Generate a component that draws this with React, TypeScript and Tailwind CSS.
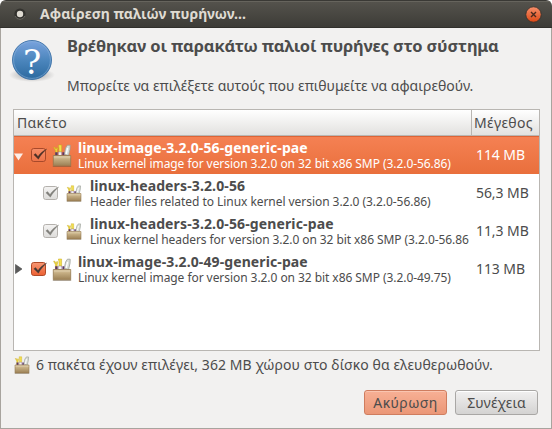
import type { ReactNode } from 'react';

function Toolbox({ className }: { className: string }) {
  return (
    <svg viewBox="0 0 20 23" className={className} preserveAspectRatio="none">
      <defs>
        <linearGradient id="box" x1="0" y1="0" x2="0" y2="1">
          <stop offset="0" stopColor="#cdb991" />
          <stop offset="0.35" stopColor="#c4ad82" />
          <stop offset="1" stopColor="#9b8055" />
        </linearGradient>
      </defs>
      <path d="M12.2 10.5 13.6 4 15.4 1.2h2.8l-.2 4-1.4 6.3z" fill="#d9ddd8" stroke="#9a9e97" strokeWidth="0.8" />
      <path d="M15.6 4 14.2 10" stroke="#fff" strokeWidth="1.2" />
      <path d="M1.6 3.2h1.3l.7 1.6 1.2-.2.2-1.4.8 1.2-.6 2.2v4.6H3.4V6.6z" fill="#ecd63e" stroke="#c9a91a" strokeWidth="0.5" />
      <path d="M6.4 1h3.2v7.4H7V4z" fill="#f3e04c" stroke="#c9a91a" strokeWidth="0.5" />
      <path d="M3.2 8.3h2.4v3.2H3.2zM10.4 8.3h1.8v3.2h-1.8z" fill="#5c3566" />
      <path d="M6.4 8h3.2v3.5H6.4z" fill="#f4f2f4" stroke="#8b7490" strokeWidth="0.5" />
      <path d="M1.3 11.5h17.4v10.3H1.3z" fill="url(#box)" stroke="#93794f" strokeWidth="0.8" />
      <path d="M1.8 12h16.4v2.2H1.8z" fill="#dccba6" opacity="0.7" />
      <path d="M.8 22.5h18.4" stroke="#5e4f38" strokeWidth="0.8" opacity="0.5" />
    </svg>
  );
}

function Check({ kind }: { kind: 'selected' | 'orange' | 'gray' }) {
  const c = {
    selected: { a: '#f68e68', b: '#ee7348', s: '#a8492a', t: '#4b3027' },
    orange: { a: '#f79774', b: '#ec6032', s: '#b04a28', t: '#453a35' },
    gray: { a: '#f4f3f2', b: '#dddcda', s: '#b4b1ad', t: '#81807c' },
  }[kind];
  return (
    <svg viewBox="0 0 17 16" className="h-4 w-[17px] shrink-0">
      <defs>
        <linearGradient id={'check-' + kind} x1="0" y1="0" x2="0" y2="1">
          <stop offset="0" stopColor={c.a} />
          <stop offset="1" stopColor={c.b} />
        </linearGradient>
      </defs>
      <rect x="0.5" y="1.5" width="14" height="13" rx="2.2" fill={'url(#check-' + kind + ')'} stroke={c.s} />
      <path d="M2.8 7.8 4.6 6.6 7 9.4C9 6.4 12 3.8 15.8 2 12.2 5.2 9.4 8.8 7.4 12.2z" fill={c.t} stroke={c.t} strokeWidth="0.3" />
    </svg>
  );
}

interface RowProps {
  arrow?: 'down' | 'right';
  selected?: boolean;
  name: string;
  nameClass: string;
  detail: string;
  detailClass: string;
  size: string;
}

function Row({ arrow, selected, name, nameClass, detail, detailClass, size }: RowProps) {
  const tone = selected
    ? 'bg-linear-to-b from-[#f58153] to-[#e96f3c] text-white shadow-[inset_0_1px_0_#dd6436]'
    : 'text-[#4c4c4c]';
  return (
    <div className={'flex h-[38px] items-center ' + tone}>
      <div className={arrow ? 'w-[17px] shrink-0' : 'w-[29px] shrink-0'}>
        {arrow === 'down' && (
          <svg viewBox="0 0 10 8" className="mt-1 h-2 w-[10px]">
            <path d="M0 .5h9L4.5 7.5z" fill="#fdeee8" />
          </svg>
        )}
        {arrow === 'right' && (
          <svg viewBox="0 0 10 10" className="h-[10px] w-[10px]">
            <path d="M1.5 .5 8 5 1.5 9.5z" fill="#5a5a5a" stroke="#4a4a4a" strokeWidth="0.6" />
          </svg>
        )}
      </div>
      <Check kind={selected ? 'selected' : arrow ? 'orange' : 'gray'} />
      {arrow ? (
        <Toolbox className="ml-1 h-[23px] w-5 shrink-0" />
      ) : (
        <Toolbox className="ml-[6px] h-[17px] w-4 shrink-0" />
      )}
      <div className={'flex h-full min-w-0 grow flex-col justify-center overflow-hidden pt-[2px] whitespace-nowrap ' + (arrow ? 'ml-[6px]' : 'ml-[8px]')}>
        <div className={'text-[14px] leading-[16px] font-bold ' + nameClass}>{name}</div>
        <div className={'text-[12px] leading-[16px] ' + detailClass}>{detail}</div>
      </div>
      <div className="w-[70px] shrink-0 pb-[2px] pl-[7px] text-[14px] tracking-[-0.08px]">{size}</div>
    </div>
  );
}

function Button({ className, children }: { className: string; children: ReactNode }) {
  return (
    <button
      className={
        'flex h-[25px] w-[83px] items-center justify-center rounded-[3px] border pb-px text-[14px] text-[#4c4c4c] ' +
        className
      }
    >
      {children}
    </button>
  );
}

export default function App() {
  return (
    <div className="h-[429px] w-[552px] bg-white font-['Noto_Sans','Open_Sans',sans-serif]">
      <div className="flex h-full flex-col overflow-hidden rounded-t-[6px] bg-[#f2f1f0] text-[#4c4c4c]">
        <header className="flex h-7 shrink-0 items-center border-t border-b border-t-[#3a3935] border-b-[#31302c] bg-linear-to-b from-[#55534d] to-[#3d3c37] pl-[14px] pr-[10px] shadow-[inset_0_1px_0_#66645d]">
          <svg viewBox="0 0 12 12" className="h-3 w-3">
            <circle cx="6" cy="6" r="5.6" fill="#33322e" />
            <path d="M1 8a5.4 5.4 0 0 0 10 0" fill="none" stroke="#77756f" strokeWidth="0.8" />
            <circle cx="6" cy="6" r="3.2" fill="#dfdbd2" />
          </svg>
          <h1 className="ml-[14px] text-[14px] leading-[26px] font-bold tracking-[0.03px] whitespace-nowrap text-[#dfdbd2]">
            Αφαίρεση παλιών πυρήνων...
          </h1>
          <svg viewBox="0 0 17 17" className="ml-auto h-[17px] w-[17px]">
            <defs>
              <linearGradient id="close" x1="0" y1="0" x2="0" y2="1">
                <stop offset="0" stopColor="#f7906c" />
                <stop offset="1" stopColor="#dd4814" />
              </linearGradient>
            </defs>
            <circle cx="8.5" cy="8.5" r="7.7" fill="url(#close)" stroke="#35302b" strokeWidth="0.8" />
            <path d="m6 6 5 5m0-5-5 5" stroke="#4a2a1e" strokeWidth="1.4" />
          </svg>
        </header>

        <main className="flex grow flex-col border-x border-b border-[#a8a49e] px-3">
          <div className="flex h-[81px] shrink-0 pt-[6px]">
            <svg viewBox="0 0 46 46" className="-ml-1 mt-[4px] h-[46px] w-[46px] shrink-0">
              <defs>
                <linearGradient id="ask" x1="0" y1="0" x2="0" y2="1">
                  <stop offset="0" stopColor="#7aa3de" />
                  <stop offset="0.5" stopColor="#4c86bd" />
                  <stop offset="1" stopColor="#2b699f" />
                </linearGradient>
                <radialGradient id="shade">
                  <stop offset="0.5" stopColor="#777" stopOpacity="0.35" />
                  <stop offset="1" stopColor="#777" stopOpacity="0" />
                </radialGradient>
              </defs>
              <ellipse cx="23" cy="37" rx="23" ry="7" fill="url(#shade)" />
              <circle cx="23" cy="22" r="19.5" fill="url(#ask)" stroke="#3a6fa6" strokeWidth="0.9" />
              <circle cx="23" cy="22" r="18.4" fill="none" stroke="#8db4dc" strokeWidth="0.9" opacity="0.6" />
              <text x="23" y="35.5" textAnchor="middle" fill="#fff" fontSize="34" fontFamily="DejaVu Serif, serif">?</text>
            </svg>
            <div className="ml-[12px] whitespace-nowrap">
              <h2 className="text-[16.5px] leading-6 font-bold tracking-[-0.16px]">
                Βρέθηκαν οι παρακάτω παλιοί πυρήνες στο σύστημα
              </h2>
              <p className="mt-[18px] text-[14px] leading-5 tracking-[0.02px]">
                Μπορείτε να επιλέξετε αυτούς που επιθυμείτε να αφαιρεθούν.
              </p>
            </div>
          </div>

          <section className="h-[242px] w-[527px] shrink-0 border border-[#b9b6b2] bg-white">
            <div className="flex h-[26px] items-center border-b border-[#b9b6b2] bg-linear-to-b from-white to-[#e2e1df] text-[14px] tracking-[0.32px]">
              <div className="flex h-full w-[458px] items-center border-r border-[#b9b6b2] pl-[3px]">Πακέτο</div>
              <div className="pl-[2px]">Μέγεθος</div>
            </div>
            <Row
              arrow="down"
              selected
              name="linux-image-3.2.0-56-generic-pae"
              nameClass="tracking-[0.11px]"
              detail="Linux kernel image for version 3.2.0 on 32 bit x86 SMP (3.2.0-56.86)"
              detailClass="tracking-[-0.06px]"
              size="114 MB"
            />
            <Row
              name="linux-headers-3.2.0-56"
              nameClass="tracking-[0.13px]"
              detail="Header files related to Linux kernel version 3.2.0 (3.2.0-56.86)"
              detailClass="tracking-[-0.05px]"
              size="56,3 MB"
            />
            <Row
              name="linux-headers-3.2.0-56-generic-pae"
              nameClass="tracking-[0.13px]"
              detail="Linux kernel headers for version 3.2.0 on 32 bit x86 SMP (3.2.0-56.86"
              detailClass="tracking-[-0.075px]"
              size="11,3 MB"
            />
            <Row
              arrow="right"
              name="linux-image-3.2.0-49-generic-pae"
              nameClass="tracking-[0.11px]"
              detail="Linux kernel image for version 3.2.0 on 32 bit x86 SMP (3.2.0-49.75)"
              detailClass="tracking-[-0.06px]"
              size="113 MB"
            />
          </section>

          <div className="mt-[2px] flex h-[23px] shrink-0 items-center">
            <Toolbox className="ml-px h-[18px] w-4" />
            <p className="ml-[6px] text-[14px] leading-5 tracking-[0.07px] whitespace-nowrap">
              6 πακέτα έχουν επιλέγει, 362 MB χώρου στο δίσκο θα ελευθερωθούν.
            </p>
          </div>

          <div className="mt-[14px] flex justify-end gap-2 pr-px">
            <Button className="border-[#cf7d5f] bg-linear-to-b from-[#f7b095] to-[#eb9777] tracking-[0.4px] shadow-[inset_0_1px_0_#fac5b0]">
              Ακύρωση
            </Button>
            <Button className="border-[#a9a7a5] bg-linear-to-b from-[#f1f0f0] to-[#d4d3d2] tracking-[0.12px] shadow-[inset_0_1px_0_#fff]">
              Συνέχεια
            </Button>
          </div>
        </main>
      </div>
    </div>
  );
}
